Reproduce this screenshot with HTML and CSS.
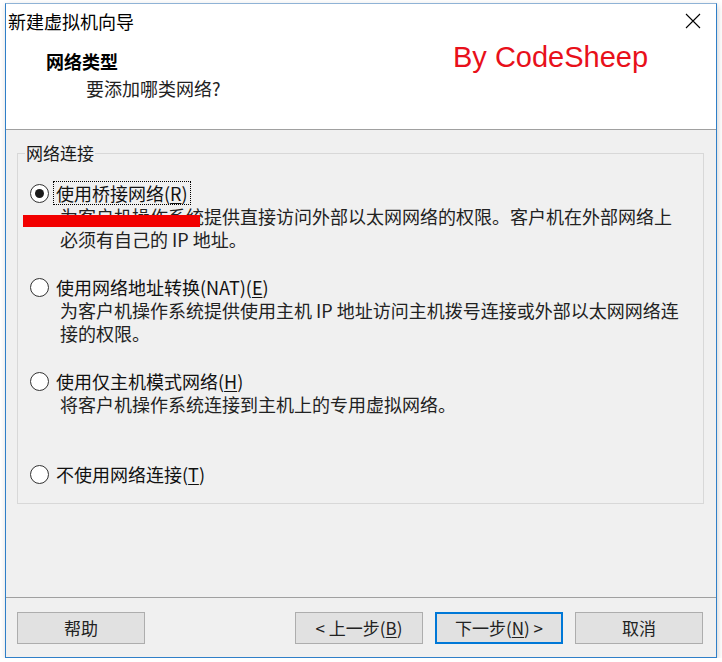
FILE: index.html
```html
<!DOCTYPE html>
<html lang="zh-CN">
<head>
<meta charset="utf-8">
<title>新建虚拟机向导</title>
<link rel="stylesheet" href="styles.css">
</head>
<body>
<div class="window">
  <div class="header">
    <div class="titlebar">
      <span class="title">新建虚拟机向导</span>
      <svg class="close" width="16" height="16" viewBox="0 0 16 16" aria-hidden="true">
        <path d="M1 1 L15 15 M15 1 L1 15" stroke="#000" stroke-width="1.1" fill="none"/>
      </svg>
    </div>
    <div class="intro">
      <div class="intro-text">
        <div class="heading">网络类型</div>
        <div class="sub">要添加哪类网络?</div>
      </div>
      <div class="brand">By CodeSheep</div>
    </div>
  </div>

  <div class="content">
    <fieldset class="group">
      <legend>网络连接</legend>

      <div class="option">
        <div class="opt-row">
          <span class="radio checked"></span>
          <span class="label focused">使用桥接网络(<u>R</u>)</span>
          <span class="redact"></span>
        </div>
        <div class="desc">为客户机操作系统提供直接访问外部以太网网络的权限。客户机在外部网络上<br>必须有自己的 IP 地址。</div>
      </div>

      <div class="option">
        <div class="opt-row">
          <span class="radio"></span>
          <span class="label">使用网络地址转换(NAT)(<u>E</u>)</span>
        </div>
        <div class="desc">为客户机操作系统提供使用主机 IP 地址访问主机拨号连接或外部以太网网络连<br>接的权限。</div>
      </div>

      <div class="option">
        <div class="opt-row">
          <span class="radio"></span>
          <span class="label">使用仅主机模式网络(<u>H</u>)</span>
        </div>
        <div class="desc">将客户机操作系统连接到主机上的专用虚拟网络。</div>
      </div>

      <div class="option option-last">
        <div class="opt-row">
          <span class="radio"></span>
          <span class="label">不使用网络连接(<u>T</u>)</span>
        </div>
      </div>
    </fieldset>
  </div>

  <div class="footer">
    <button class="btn btn-help">帮助</button>
    <button class="btn">&lt; 上一步(<u>B</u>)</button>
    <button class="btn btn-default">下一步(<u>N</u>) &gt;</button>
    <button class="btn">取消</button>
  </div>
</div>
</body>
</html>
```

FILE: styles.css
```css
* {
  box-sizing: border-box;
}

html, body {
  margin: 0;
  padding: 0;
  background: #ffffff;
}

body {
  font-family: "Noto Sans CJK SC", "Noto Sans", sans-serif;
  color: #000;
}

.window {
  margin: 3px 0 0 5px;
  width: 712px;
  height: 655px;
  border: 1px solid #2f7fc8;
  border-top-color: #8fb3d6;
  background: #f0f0f0;
  display: flex;
  flex-direction: column;
  box-shadow: 1px 2px 6px rgba(0, 0, 0, 0.18);
}

/* ---------- header ---------- */
.header {
  background: #ffffff;
  height: 126px;
  border-bottom: 1px solid #a0a0a0;
  flex: none;
}

.titlebar {
  display: flex;
  align-items: center;
  height: 34px;
  padding-left: 2px;
}

.title {
  font-size: 18px;
  line-height: 34px;
  flex: 1;
}

.close {
  margin-right: 15px;
  margin-top: -1px;
}

.intro {
  display: grid;
  grid-template-columns: 447px auto;
}

.intro-text {
  padding-left: 40px;
  padding-top: 11px;
}

.heading {
  font-size: 18px;
  font-weight: bold;
  line-height: 24px;
}

.sub {
  font-size: 18px;
  line-height: 24px;
  margin-top: 3px;
  padding-left: 40px;
  color: #222;
}

.brand {
  font-family: "Liberation Sans", Arial, sans-serif;
  color: #e8101a;
  font-size: 29px;
  line-height: 38px;
  padding-top: 0;
}

/* ---------- content ---------- */
.content {
  flex: 1;
  padding: 13px 12px 0 11px;
}

.group {
  margin: 0;
  border: 1px solid #d8d8d8;
  padding: 18px 0 17px 0;
  min-width: 0;
}

.group legend {
  font-size: 17px;
  line-height: 20px;
  padding: 0 1px;
  margin-left: 7px;
  color: #1a1a1a;
}

.option {
  margin-bottom: 24px;
}

.option-last {
  margin-top: 46px;
  margin-bottom: 0;
}

.opt-row {
  display: flex;
  align-items: center;
  height: 24px;
  padding-left: 12px;
  position: relative;
}

.radio {
  width: 19px;
  height: 19px;
  border: 1px solid #333;
  border-radius: 50%;
  background: #fff;
  display: flex;
  align-items: center;
  justify-content: center;
  flex: none;
}

.radio.checked::after {
  content: "";
  width: 9px;
  height: 9px;
  border-radius: 50%;
  background: #1a1a1a;
}

.label {
  margin-left: 4px;
  padding: 0 2px;
  font-size: 18px;
  line-height: 22px;
  border: 1px solid transparent;
  color: #111;
}

.label.focused {
  border: 1px dotted #000;
}

.label u {
  text-decoration-thickness: 1px;
  text-underline-offset: 2px;
}

.redact {
  position: absolute;
  left: 5px;
  top: 34px;
  width: 177px;
  height: 12px;
  background: #f20000;
  z-index: 2;
}

.desc {
  padding-left: 42px;
  font-size: 18px;
  line-height: 23px;
  letter-spacing: 0;
  color: #222;
  white-space: nowrap;
}

/* ---------- footer ---------- */
.footer {
  flex: none;
  border-top: 1px solid #a0a0a0;
  display: flex;
  gap: 12px;
  padding: 14px 13px 13px 11px;
}

.btn {
  width: 128px;
  height: 32px;
  background: #e1e1e1;
  border: 1px solid #adadad;
  font-family: "Noto Sans CJK SC", "Noto Sans", sans-serif;
  font-size: 17px;
  line-height: 20px;
  color: #222;
  padding: 0;
  margin: 0;
}

.btn u {
  text-underline-offset: 2px;
}

.btn-help {
  margin-right: auto;
}

.btn-default {
  border: 2px solid #0078d7;
}
```
